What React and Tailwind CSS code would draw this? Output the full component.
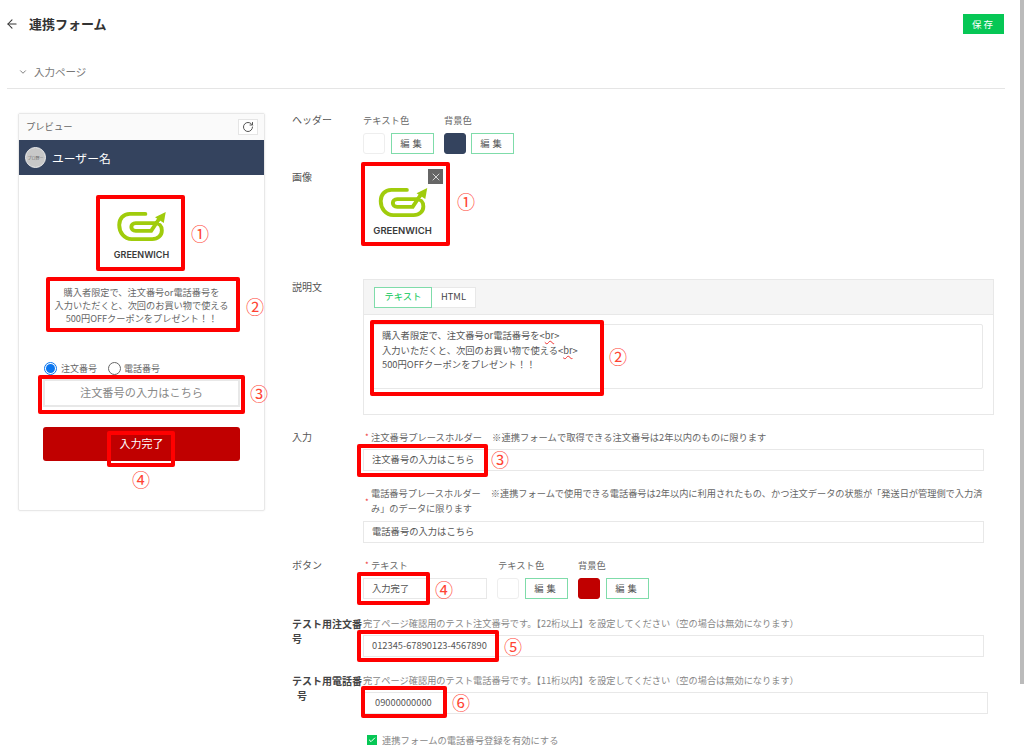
import { ArrowLeft, ChevronDown, RotateCw, X, Check } from 'lucide-react'

// GREENWICH のロゴ（マークだけ SVG、文字は実テキスト）
function Logo({ markClass, textClass }) {
  return (
    <div className="flex flex-col items-center">
      <svg viewBox="0 0 52 32" className={markClass} fill="none" stroke="#a0cc0c" strokeLinecap="round">
        <path d="M30 3 H14 C7 3 3 8 3 14.500 C3 22 8 29 16 29 H37 C43 29 47 25 47 20 C47 15.500 44 12.500 40 12.500 H20 C17 12.500 15.500 14.500 15.500 16.500 C15.500 18.500 17 20.500 20 20.500 H36 L45 7" strokeWidth="4" />
        <path d="M40 6.500 L51 1 L49 12.500 Z" fill="#a0cc0c" stroke="none" />
      </svg>
      <div className={textClass} style={{ fontFamily: 'Inter, sans-serif' }}>GREENWICH</div>
    </div>
  )
}

function EditButton() {
  return (
    <button className="h-[21px] w-[43px] border border-[#7fdcaa] bg-white text-[9.300px] tracking-[3px] text-[#555]">
      編集
    </button>
  )
}

function Swatch({ className }) {
  return <div className={`h-[21px] w-[22px] rounded-[3px] border ${className}`} />
}

function TextBox({ value, className = 'w-[621px]', inset = 'pl-[8px]' }) {
  return (
    <div className={`flex h-[22px] items-center border border-[#e8e8e8] text-[9.300px] text-[#555] ${inset} ${className}`}>
      {value}
    </div>
  )
}

function Row({ label, labelClass = 'text-[10px] leading-[14px] text-[#555]', className = '', children }) {
  return (
    <div className={`flex ${className}`}>
      <div className={`w-[71px] shrink-0 ${labelClass}`}>{label}</div>
      <div className="min-w-0 flex-1">{children}</div>
    </div>
  )
}

function Required() {
  return <span className="absolute left-[2px] top-[0px] text-[8px] text-[#e33]">*</span>
}

// 右カラムの赤い注釈
function RedBox({ className }) {
  return <div className={`absolute rounded-[2px] border-[4px] border-[#f00] ${className}`} />
}

function Mark({ children, className }) {
  return <div className={`absolute text-[18px] leading-[18px] text-[#f43] ${className}`}>{children}</div>
}

export default function App() {
  return (
    <div
      className="relative flex h-[756px] w-[1024px] overflow-hidden bg-white"
      style={{ fontFamily: '"Noto Sans CJK JP", "Liberation Sans", sans-serif' }}
    >
      <div className="w-[1020px] shrink-0">
        {/* ヘッダー */}
        <div className="mt-[14px] flex h-[20px] items-center justify-between pl-[5px] pr-[16px]">
          <div className="flex items-center">
            <ArrowLeft size={14} strokeWidth={1.800} className="text-[#333]" />
            <span className="ml-[10px] text-[13px] font-bold text-[#333]">連携フォーム</span>
          </div>
          <button className="h-[20px] w-[41px] bg-[#06c755] text-[9.500px] tracking-[2px] text-white">保存</button>
        </div>

        {/* セクション見出し */}
        <div className="ml-[7px] mr-[15px] mt-[28px] flex h-[27px] items-start border-b border-[#e5e5e5] pl-[11px]">
          <ChevronDown size={10} className="mt-[5px] text-[#666]" />
          <span className="ml-[6px] text-[10.500px] leading-[20px] text-[#777]">入力ページ</span>
        </div>

        <div className="flex pl-[18px] pt-[24px]">
          {/* プレビュー */}
          <div className="h-[398px] w-[247px] shrink-0 rounded-[2px] border border-[#e8e8e8] shadow-[0_0_2px_rgba(0,0,0,0.08)]">
            <div className="flex h-[26px] items-center justify-between bg-[#fafafa] pl-[7px] pr-[6px]">
              <span className="text-[9.300px] text-[#666]">プレビュー</span>
              <div className="flex h-[16px] w-[20px] items-center justify-center border border-[#e5e5e5] bg-white">
                <RotateCw size={12} className="text-[#555]" />
              </div>
            </div>
            <div className="flex h-[35px] items-center bg-[#34435e] pl-[6px]">
              <div className="flex h-[21px] w-[21px] items-center justify-center overflow-hidden whitespace-nowrap rounded-full border border-[#eee] bg-[#c8c8c8] text-[4px] text-[#666]">
                プロ野ー
              </div>
              <span className="ml-[6px] text-[11.800px] text-white">ユーザー名</span>
            </div>
            <div className="mt-[36px] flex flex-col items-center">
              <Logo markClass="h-[31px] w-[51px]" textClass="mt-[6px] text-[9px] font-semibold leading-[14px] text-[#3a3a3a]" />
            </div>
            <div className="mt-[24px] text-center text-[9.200px] leading-[13px] text-[#666]">
              <div>購入者限定で、注文番号or電話番号を</div>
              <div>入力いただくと、次回のお買い物で使える</div>
              <div>500円OFFクーポンをプレゼント！！</div>
            </div>
            <div className="mt-[37px] flex items-center pl-[25px] text-[9px] text-[#666]">
              <span className="flex h-[13px] w-[13px] items-center justify-center rounded-full border border-[#0b76ef] bg-white">
                <span className="h-[9px] w-[9px] rounded-full bg-[#0b76ef]" />
              </span>
              <span className="ml-[4px]">注文番号</span>
              <span className="ml-[11px] h-[13px] w-[13px] rounded-full border border-[#666] bg-white" />
              <span className="ml-[3px]">電話番号</span>
            </div>
            <div className="ml-[24px] mt-[3px] flex h-[28px] w-[197px] items-center justify-center border-2 border-[#e8e8e8] text-[11.200px] text-[#888]">
              注文番号の入力はこちら
            </div>
            <div className="ml-[24px] mt-[20px] flex h-[34px] w-[197px] items-center justify-center rounded-[3px] bg-[#c00000] text-[11px] text-white">
              入力完了
            </div>
          </div>

          {/* フォーム */}
          <div className="ml-[27px] w-[705px]">
            <Row label="ヘッダー">
              <div className="flex gap-[10px]">
                <div>
                  <div className="text-[9.300px] leading-[14px] text-[#666]">テキスト色</div>
                  <div className="mt-[6px] flex gap-[6px]">
                    <Swatch className="border-[#eee] bg-white" />
                    <EditButton />
                  </div>
                </div>
                <div>
                  <div className="text-[9.300px] leading-[14px] text-[#666]">背景色</div>
                  <div className="mt-[6px] flex gap-[5px]">
                    <Swatch className="border-[#34435e] bg-[#34435e]" />
                    <EditButton />
                  </div>
                </div>
              </div>
            </Row>

            <Row label="画像" className="mt-[13px]" labelClass="mt-[3px] text-[10px] leading-[14px] text-[#555]">
              <div className="relative flex h-[74px] w-[79px] flex-col items-center justify-end pb-[3px]">
                <Logo markClass="h-[31px] w-[52px]" textClass="mt-[6px] text-[9.500px] font-semibold leading-[14px] text-[#3a3a3a]" />
                <div className="absolute right-[-1px] top-[2px] flex h-[15px] w-[15px] items-center justify-center bg-[#666]">
                  <X size={12} strokeWidth={1.500} className="text-white" />
                </div>
              </div>
            </Row>

            <Row label="説明文" className="mt-[38px]" labelClass="mt-[1px] text-[10px] leading-[14px] text-[#555]">
              <div className="h-[136px] w-[631px] border border-[#e8e8e8]">
                <div className="flex h-[35px] items-center border-b border-[#e8e8e8] bg-[#f5f5f5] pl-[10px]">
                  <div className="flex h-[21px] w-[58px] items-center justify-center border border-[#7fdcaa] bg-white text-[9.300px] text-[#06c755]">
                    テキスト
                  </div>
                  <div className="flex h-[21px] w-[44px] items-center justify-center border border-l-0 border-[#e8e8e8] bg-white text-[9.300px] text-[#444]">
                    HTML
                  </div>
                </div>
                <div className="ml-[7px] mt-[9px] h-[65px] w-[612px] rounded-[2px] border border-[#e8e8e8] pl-[10px] pt-[3px] text-[9.300px] leading-[14.500px] text-[#555]">
                  <div>
                    購入者限定で、注文番号or電話番号を&lt;<span className="underline decoration-wavy decoration-[#e33]">br</span>&gt;
                  </div>
                  <div>
                    入力いただくと、次回のお買い物で使える&lt;<span className="underline decoration-wavy decoration-[#e33]">br</span>&gt;
                  </div>
                  <div>500円OFFクーポンをプレゼント！！</div>
                </div>
              </div>
            </Row>

            <Row label="入力" className="mt-[15px]">
              <div className="relative pl-[8px] text-[9.300px] leading-[14px] text-[#666]">
                <Required />
                注文番号プレースホルダー<span className="ml-[10px]">※連携フォームで取得できる注文番号は2年以内のものに限ります</span>
              </div>
              <TextBox value="注文番号の入力はこちら" className="mt-[5px] w-[621px]" />
              <div className="relative mt-[15px] w-[621px] pl-[8px] text-[9.200px] leading-[15px] text-[#666]">
                <span className="absolute left-[2px] top-[8px] text-[8px] text-[#e33]">*</span>
                <div className="whitespace-nowrap">電話番号プレースホルダー<span className="ml-[10px]">※連携フォームで使用できる電話番号は2年以内に利用されたもの、かつ注文データの状態が「発送日が管理側で入力済</span></div>
                <div>み」のデータに限ります</div>
              </div>
              <TextBox value="電話番号の入力はこちら" className="mt-[5px] w-[621px]" />
            </Row>

            <Row label="ボタン" className="mt-[15px]">
              <div className="flex gap-[10px]">
                <div className="w-[124px]">
                  <div className="relative pl-[8px] text-[9.300px] leading-[14px] text-[#666]">
                    <Required />
                    テキスト
                  </div>
                  <div className="mt-[6px] flex h-[21px] items-center border border-[#e8e8e8] pl-[8px] text-[9.300px] text-[#555]">入力完了</div>
                </div>
                <div>
                  <div className="pl-[1px] text-[9.300px] leading-[14px] text-[#666]">テキスト色</div>
                  <div className="mt-[6px] flex gap-[6px]">
                    <Swatch className="border-[#eee] bg-white" />
                    <EditButton />
                  </div>
                </div>
                <div>
                  <div className="text-[9.300px] leading-[14px] text-[#666]">背景色</div>
                  <div className="mt-[6px] flex gap-[6px]">
                    <Swatch className="border-[#c00000] bg-[#c00000]" />
                    <EditButton />
                  </div>
                </div>
              </div>
            </Row>

            <Row
              label={<>テスト用注文番<br />号</>}
              className="mt-[17px]"
              labelClass="text-[10px] font-bold leading-[15px] text-[#444]"
            >
              <div className="text-[9.200px] leading-[14px] text-[#888]">完了ページ確認用のテスト注文番号です。【22桁以上】を設定してください（空の場合は無効になります）</div>
              <TextBox value="012345-67890123-4567890" className="mt-[5px] w-[621px]" />
            </Row>

            <Row
              label={<>テスト用電話番<br /><span className="pl-[5px]">号</span></>}
              className="mt-[16px]"
              labelClass="text-[10px] font-bold leading-[15px] text-[#444]"
            >
              <div className="text-[9.200px] leading-[14px] text-[#888]">完了ページ確認用のテスト電話番号です。【11桁以内】を設定してください（空の場合は無効になります）</div>
              <TextBox value="09000000000" className="mt-[5px] w-[625px]" inset="pl-[11px]" />
            </Row>

            <div className="ml-[75px] mt-[21px] flex items-center">
              <div className="flex h-[10px] w-[10px] items-center justify-center bg-[#06c755]">
                <Check size={8} strokeWidth={3} className="text-white" />
              </div>
              <span className="ml-[5px] text-[9.300px] leading-[10px] text-[#888]">連携フォームの電話番号登録を有効にする</span>
            </div>
          </div>
        </div>
      </div>

      {/* スクロールバー */}
      <div className="h-[684px] w-[4px] bg-[#bbb]" />

      {/* 赤枠の注釈 */}
      <RedBox className="left-[96px] top-[195px] h-[76px] w-[89px]" />
      <RedBox className="left-[46px] top-[277px] h-[55px] w-[194px]" />
      <RedBox className="left-[38px] top-[375px] h-[39px] w-[207px]" />
      <RedBox className="left-[107px] top-[431px] h-[36px] w-[68px]" />
      <RedBox className="left-[361px] top-[162px] h-[84px] w-[89px]" />
      <RedBox className="left-[370px] top-[320px] h-[76px] w-[234px]" />
      <RedBox className="left-[357px] top-[444px] h-[33px] w-[131px]" />
      <RedBox className="left-[357px] top-[572px] h-[33px] w-[73px]" />
      <RedBox className="left-[357px] top-[630px] h-[32px] w-[142px]" />
      <RedBox className="left-[361px] top-[686px] h-[32px] w-[86px]" />

      <Mark className="left-[191px] top-[224px]">①</Mark>
      <Mark className="left-[246px] top-[297px]">②</Mark>
      <Mark className="left-[250px] top-[384px]">③</Mark>
      <Mark className="left-[132px] top-[470px]">④</Mark>
      <Mark className="left-[457px] top-[192px]">①</Mark>
      <Mark className="left-[609px] top-[347px]">②</Mark>
      <Mark className="left-[491px] top-[450px]">③</Mark>
      <Mark className="left-[435px] top-[580px]">④</Mark>
      <Mark className="left-[504px] top-[637px]">⑤</Mark>
      <Mark className="left-[452px] top-[693px]">⑥</Mark>
    </div>
  )
}
